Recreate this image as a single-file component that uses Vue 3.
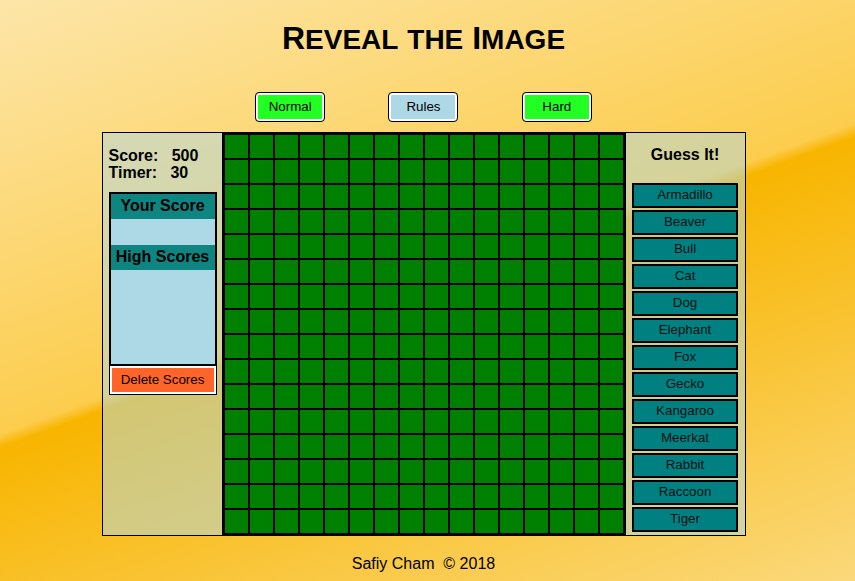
<script setup>
const animals = [
  'Armadillo', 'Beaver', 'Bull', 'Cat', 'Dog', 'Elephant', 'Fox',
  'Gecko', 'Kangaroo', 'Meerkat', 'Rabbit', 'Raccoon', 'Tiger',
]
const score = 500
const timer = 30
const cellCount = 16 * 16
</script>

<template>
  <div class="page">
    <h1 class="title">R<span class="small">EVEAL</span> <span class="small">THE</span> I<span class="small">MAGE</span></h1>

    <nav class="controls">
      <button type="button" class="control go">Normal</button>
      <button type="button" class="control info">Rules</button>
      <button type="button" class="control go">Hard</button>
    </nav>

    <main class="game">
      <aside class="panel stats">
        <div class="readout">
          <div>Score: &nbsp; {{ score }}</div>
          <div>Timer: &nbsp; {{ timer }}</div>
        </div>
        <section class="scores">
          <h2 class="scores-heading">Your Score</h2>
          <div class="own-score"></div>
          <h2 class="scores-heading">High Scores</h2>
          <div class="high-scores"></div>
        </section>
        <button type="button" class="delete">Delete Scores</button>
      </aside>

      <div class="board">
        <div v-for="n in cellCount" :key="n" class="cell"></div>
      </div>

      <aside class="panel guesses">
        <h2 class="guess-heading">Guess It!</h2>
        <button v-for="animal in animals" :key="animal" type="button" class="guess">{{ animal }}</button>
      </aside>
    </main>

    <footer class="footer">Safiy Cham &nbsp;© 2018</footer>
  </div>
</template>

<style>
body {
  margin: 0;
}
</style>

<style scoped>
.page {
  box-sizing: border-box;
  min-height: 100vh;
  padding: 20px 8px 8px 0;
  display: flex;
  flex-direction: column;
  align-items: center;
  font-family: "Liberation Sans", Arial, sans-serif;
  font-size: 16px;
  color: #000;
  background: linear-gradient(160deg, #fceabb -10%, #fccd4d 48.7%, #f8b500 50.2%, #fbdf93 110%);
}

button {
  box-sizing: border-box;
  font-family: inherit;
  color: #000;
  cursor: pointer;
}

.title {
  margin: 0;
  font-size: 32px;
  line-height: 36px;
}

.small {
  font-size: 28px;
  line-height: 28px;
}

.controls {
  width: 100%;
  max-width: 400px;
  margin-top: 36px;
  display: grid;
  grid-template-columns: repeat(3, 1fr);
  justify-items: center;
}

.control {
  width: 70px;
  height: 30px;
  padding: 0 0 2px;
  border: 1px solid #000;
  border-radius: 4px;
  box-shadow: inset 0 0 0 2px #fff;
}

.go {
  background: #22ff22;
}

.info {
  background: lightblue;
}

.game {
  width: 100%;
  max-width: 644px;
  margin-top: 10px;
  display: grid;
  grid-template-columns: 120px 1fr 120px;
}

.panel {
  box-sizing: border-box;
  border: 1px solid #000;
  background: rgba(173, 216, 230, 0.5);
}

.stats {
  border-right: 0;
  padding: 14px 5px 0 6px;
}

.readout {
  font-weight: bold;
  line-height: 17px;
}

.scores {
  margin-top: 11px;
  border: 2px solid #000;
  background: lightblue;
}

.scores-heading {
  margin: 0;
  padding-bottom: 2px;
  font-size: 16px;
  line-height: 23px;
  text-align: center;
  white-space: nowrap;
  background: #0e8581;
}

.own-score {
  height: 26px;
}

.high-scores {
  height: 94px;
}

.delete {
  display: block;
  width: 100%;
  height: 30px;
  margin-top: -1px;
  padding: 0 0 2px;
  border: 1px solid #000;
  background: #ff6428;
  box-shadow: inset 0 0 0 2px #fff;
}

.board {
  display: grid;
  grid-template-columns: repeat(16, 1fr);
  align-content: start;
  border: 2px solid #000;
}

.cell {
  box-sizing: border-box;
  aspect-ratio: 1;
  border: 1px solid #000;
  background: green;
}

.guesses {
  border-left: 0;
  padding: 0 7px 3px 6px;
  display: flex;
  flex-direction: column;
  gap: 2px;
}

.guess-heading {
  margin: 13px 0 18px;
  padding-left: 1px;
  font-size: 16px;
  line-height: 17px;
  text-align: center;
}

.guess {
  height: 25px;
  padding: 0 0 2px 1px;
  border: 2px solid #000;
  background: teal;
  color: rgba(0, 0, 0, 0.9);
}

.footer {
  margin-top: 19px;
  line-height: 18px;
}
</style>
